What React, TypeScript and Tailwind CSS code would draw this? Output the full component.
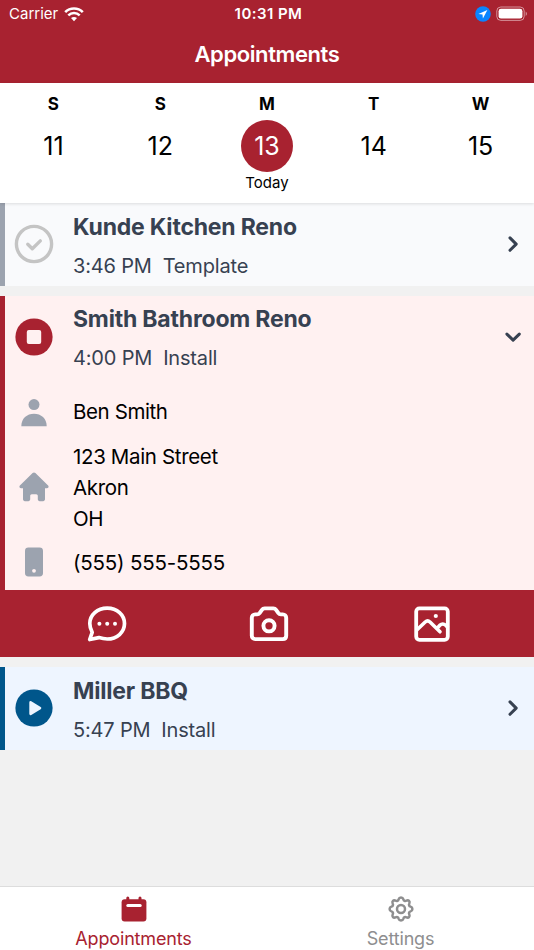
import { useState, type ReactNode } from 'react';
import clsx from 'clsx';

interface Day {
  letter: string;
  date: number;
  today?: boolean;
}

interface Appointment {
  id: string;
  name: string;
  time: string;
  type: string;
  status: 'done' | 'active' | 'upcoming';
  contact?: string;
  address?: string[];
  phone?: string;
}

const days: Day[] = [
  { letter: 'S', date: 11 },
  { letter: 'S', date: 12 },
  { letter: 'M', date: 13, today: true },
  { letter: 'T', date: 14 },
  { letter: 'W', date: 15 },
];

const appointments: Appointment[] = [
  { id: '1', name: 'Kunde Kitchen Reno', time: '3:46 PM', type: 'Template', status: 'done' },
  {
    id: '2',
    name: 'Smith Bathroom Reno',
    time: '4:00 PM',
    type: 'Install',
    status: 'active',
    contact: 'Ben Smith',
    address: ['123 Main Street', 'Akron', 'OH'],
    phone: '(555) 555-5555',
  },
  { id: '3', name: 'Miller BBQ', time: '5:47 PM', type: 'Install', status: 'upcoming' },
];

const cardStyles = {
  done: 'bg-[#f9fafc] border-[#9ca3af]',
  active: 'bg-[#fff1f1] border-[#a82230]',
  upcoming: 'bg-[#eef5ff] border-[#00568b]',
};

/* Icons */

function WifiIcon() {
  return (
    <svg width="20" height="15" viewBox="0 0 20 15" fill="none" stroke="white">
      <path d="M1.2 5.2C6 .3 14 .3 18.8 5.2" strokeWidth="2.6" />
      <path d="M4.3 8.4c3.2-3.2 8.2-3.2 11.4 0" strokeWidth="2.5" />
      <path d="M10 14.2 7 11.1c1.7-1.6 4.3-1.6 6 0Z" fill="white" stroke="none" />
    </svg>
  );
}

function LocationIcon() {
  return (
    <svg width="16" height="16" viewBox="0 0 16 16">
      <circle cx="8" cy="8" r="7.8" fill="#0a84ff" />
      <path d="M12.4 3.9 3.4 8l4.1.5.4 4.1Z" fill="white" />
    </svg>
  );
}

function BatteryIcon() {
  return (
    <svg width="32" height="16" viewBox="0 0 32 16">
      <rect x=".8" y="1" width="27.4" height="13.4" rx="4" fill="none" stroke="white" strokeOpacity=".5" strokeWidth="1" />
      <rect x="2.6" y="2.8" width="23.8" height="9.8" rx="2.4" fill="white" />
      <path d="M29.7 5.4c1.7.7 1.7 3.8 0 4.5Z" fill="white" fillOpacity=".5" />
    </svg>
  );
}

function StatusIcon({ status }: { status: Appointment['status'] }) {
  if (status === 'done') {
    return (
      <svg width="40" height="40" viewBox="0 0 40 40" fill="none" stroke="#c4c4c4">
        <circle cx="20" cy="20" r="17.6" strokeWidth="3.4" />
        <path d="m13.8 20.3 4.5 4.4 8-7.8" strokeWidth="3.4" strokeLinecap="round" strokeLinejoin="round" />
      </svg>
    );
  }
  if (status === 'active') {
    return (
      <svg width="40" height="40" viewBox="0 0 40 40">
        <circle cx="20" cy="20" r="18.6" fill="#a82230" />
        <rect x="12.8" y="12.9" width="14.4" height="14.2" rx="2" fill="#fff1f1" />
      </svg>
    );
  }
  return (
    <svg width="40" height="40" viewBox="0 0 40 40">
      <circle cx="20" cy="20" r="18.6" fill="#00568b" />
      <path d="m16.6 14.4 9.4 5.7-9.4 5.7Z" fill="#eef5ff" stroke="#eef5ff" strokeWidth="2.6" strokeLinejoin="round" />
    </svg>
  );
}

function Chevron({ open }: { open: boolean }) {
  return (
    <svg width="20" height="20" viewBox="0 0 20 20" fill="none" stroke="#374151" strokeWidth="3" strokeLinecap="round" strokeLinejoin="round">
      <path d={open ? 'm3.9 7.1 6.2 6 6.2-6' : 'm7 3.9 6.2 6.2L7 16.3'} />
    </svg>
  );
}

function PersonIcon() {
  return (
    <svg width="30" height="30" viewBox="0 0 30 30" fill="#9ca3af">
      <circle cx="15" cy="7.6" r="5.5" />
      <path d="M2.3 29.3C2.3 21.5 8 16.8 15 16.8s12.7 4.7 12.7 12.5Z" />
    </svg>
  );
}

function HomeIcon() {
  return (
    <svg width="30" height="30" viewBox="0 0 30 30" fill="#9ca3af">
      <path d="M13.6 1.1c.8-.8 2-.8 2.8 0l12.7 12.5c1 1.1.3 2.6-1.1 2.6h-2v11.1c0 1.1-.8 1.9-1.9 1.9h-3.4c-1.1 0-1.9-.8-1.9-1.9V24c0-1-.6-1.7-1.6-1.7h-4.4c-1 0-1.6.7-1.6 1.7v3.3c0 1.1-.8 1.9-1.9 1.9H5.9c-1.1 0-1.9-.8-1.9-1.9V16.2H2c-1.4 0-2.1-1.5-1.1-2.6Z" />
    </svg>
  );
}

function PhoneIcon() {
  return (
    <svg width="30" height="30" viewBox="0 0 30 30">
      <rect x="6" y=".5" width="18" height="29" rx="3.4" fill="#9ca3af" />
      <circle cx="15" cy="23.8" r="1.9" fill="#fff1f1" />
    </svg>
  );
}

function ChatIcon() {
  return (
    <svg width="40" height="36" viewBox="0 0 40 36" fill="none" stroke="white" strokeWidth="3.7" strokeLinejoin="round">
      <path d="M20.2 2.2c9.9 0 17.3 6.8 17.3 15.4S30.1 33 20.2 33c-3 0-5.7-.6-8.3-1.4l-9.2 1.9 2.5-7.1C3.8 23.9 2.8 20.9 2.8 17.6c0-8.6 7.5-15.4 17.4-15.4Z" />
      <g fill="white" stroke="none">
        <circle cx="12.4" cy="17.8" r="2" />
        <circle cx="20.2" cy="17.8" r="2" />
        <circle cx="28" cy="17.8" r="2" />
      </g>
    </svg>
  );
}

function CameraIcon() {
  return (
    <svg width="40" height="36" viewBox="0 0 40 36" fill="none" stroke="white" strokeWidth="3.9" strokeLinejoin="round">
      <path d="M2.8 11.8c0-2 1.4-3.4 3.4-3.4h2c1 0 1.8-.4 2.4-1.2l2.5-3.5c.6-.9 1.5-1.3 2.5-1.3h8.8c1 0 1.9.4 2.5 1.3l2.5 3.5c.6.8 1.4 1.2 2.4 1.2h2c2 0 3.4 1.4 3.4 3.4v18c0 2-1.4 3.3-3.4 3.3H6.2c-2 0-3.4-1.3-3.4-3.3Z" />
      <circle cx="20" cy="19.8" r="5.6" />
    </svg>
  );
}

function PictureIcon() {
  return (
    <svg width="40" height="36" viewBox="0 0 40 36" fill="none" stroke="white" strokeWidth="3.8" strokeLinejoin="round" strokeLinecap="round">
      <rect x="4.2" y="2.4" width="31.6" height="31.4" rx="3.2" />
      <path d="m4.8 24 8.4-8c1.6-1.4 3.2-1.4 4.8 0l10 9.8M25.4 22l2.7-2.9c1.5-1.5 3.8-1.5 5.3-.1l2 1.9" strokeWidth="3.6" />
      <circle cx="23.8" cy="10" r="2.1" fill="white" stroke="none" />
    </svg>
  );
}

function CalendarIcon() {
  return (
    <svg width="26" height="26" viewBox="0 0 26 26">
      <path d="M6.8 2v4M19 2v4" stroke="#a82230" strokeWidth="3" strokeLinecap="round" />
      <rect x=".6" y="3.2" width="24.8" height="22.4" rx="3" fill="#a82230" />
      <path d="M6.8 9.5h12.4" stroke="white" strokeWidth="3" strokeLinecap="round" />
    </svg>
  );
}

function GearIcon() {
  return (
    <svg width="26" height="26" viewBox="0 0 26 26" fill="none" stroke="#8e8e8f" strokeWidth="2.5" strokeLinejoin="round">
      <path d="M10.6 3.4C11.3 1 14.7 1 15.4 3.4c.4 1.5 1.6 2 3 1.3 2.2-1 3.9.7 2.9 2.9-.7 1.4-.2 2.6 1.3 3 2.4.7 2.4 4.1 0 4.8-1.5.4-2 1.6-1.3 3 1 2.2-.7 3.9-2.9 2.9-1.4-.7-2.6-.2-3 1.3-.7 2.4-4.1 2.4-4.8 0-.4-1.5-1.6-2-3-1.3-2.2 1-3.9-.7-2.9-2.9.7-1.4.2-2.6-1.3-3-2.4-.7-2.4-4.1 0-4.8 1.5-.4 2-1.6 1.3-3-1-2.2.7-3.9 2.9-2.9 1.4.7 2.6.2 3-1.3Z" />
      <circle cx="13" cy="13" r="4" />
    </svg>
  );
}

function DetailRow({ icon, children, className }: { icon: ReactNode; children: ReactNode; className?: string }) {
  return (
    <div className={clsx('flex items-center', className)}>
      <div className="w-[68px] pl-[14px] shrink-0">{icon}</div>
      <div className="text-[20.5px] leading-[31px] text-black">{children}</div>
    </div>
  );
}

function AppointmentCard({ item, open, onToggle }: { item: Appointment; open: boolean; onToggle: () => void }) {
  return (
    <section className={clsx('border-l-[5px]', cardStyles[item.status])}>
      <button onClick={onToggle} className="flex items-center w-full h-[82.5px] text-left text-[#374151]">
        <span className="w-[68px] pl-[9px] shrink-0">
          <StatusIcon status={item.status} />
        </span>
        <span className="flex-1 pt-[5px]">
          <span className="block text-[23px] leading-[38px] font-bold tracking-[-0.2px]">{item.name}</span>
          <span className="block text-[20px] leading-[40px] tracking-[-0.17px] whitespace-pre">
            {item.time}  {item.type}
          </span>
        </span>
        <span className="mr-[11px]">
          <Chevron open={open} />
        </span>
      </button>

      {open && item.address && (
        <>
          <div className="h-[212px] pt-[18px]">
            <DetailRow icon={<PersonIcon />} className="tracking-[-0.4px]">{item.contact}</DetailRow>
            <DetailRow icon={<HomeIcon />} className="mt-[13.5px] tracking-[-0.35px]">
              {item.address.map((line) => (
                <p key={line}>{line}</p>
              ))}
            </DetailRow>
            <DetailRow icon={<PhoneIcon />} className="mt-[13px] tracking-[-0.2px]">{item.phone}</DetailRow>
          </div>
          <div className="grid grid-cols-3 h-[67px] pl-[21px] pr-[21px] bg-[#a82230]">
            <button className="flex items-center justify-center"><ChatIcon /></button>
            <button className="flex items-center justify-center"><CameraIcon /></button>
            <button className="flex items-center justify-center"><PictureIcon /></button>
          </div>
        </>
      )}
    </section>
  );
}

export default function App() {
  const [openId, setOpenId] = useState<string | null>('2');

  return (
    <div className="flex flex-col w-full h-[950px] overflow-hidden bg-[#f1f1f1] font-['Inter','Liberation_Sans',sans-serif]">
      {/* Header */}
      <header className="h-[83px] shrink-0 bg-[#a82230] text-white">
        <div className="grid grid-cols-3 items-center h-7 pl-[9px] pr-[6px] text-[15px]">
          <div className="flex items-center gap-[6px]">
            <span>Carrier</span>
            <WifiIcon />
          </div>
          <div className="text-center font-semibold tracking-[0.45px]">10:31 PM</div>
          <div className="flex items-center justify-end gap-[5px]">
            <LocationIcon />
            <BatteryIcon />
          </div>
        </div>
        <h1 className="text-center text-[22px] leading-[53px] font-semibold tracking-[-0.4px]">Appointments</h1>
      </header>

      {/* Day picker */}
      <div className="relative grid grid-cols-5 h-[120px] shrink-0 bg-white text-black shadow-[0_1px_3px_rgba(0,0,0,0.12)]">
        {days.map((day) => (
          <div key={day.date} className="flex flex-col items-center pt-[11px]">
            <span className="text-[17px] leading-5 font-bold">{day.letter}</span>
            <span
              className={clsx(
                'flex items-center justify-center w-[52px] h-[52px] mt-[6px] pt-[2px] rounded-full text-[25px]',
                day.today && 'bg-[#a82230] text-white'
              )}
            >
              {day.date}
            </span>
            {day.today && <span className="mt-px text-[15px] leading-5">Today</span>}
          </div>
        ))}
      </div>

      {/* Appointments */}
      <main className="flex flex-col flex-1 gap-[10px]">
        {appointments.map((item) => (
          <AppointmentCard
            key={item.id}
            item={item}
            open={openId === item.id}
            onToggle={() => setOpenId(openId === item.id ? null : item.id)}
          />
        ))}
      </main>

      {/* Tab bar */}
      <nav className="grid grid-cols-2 h-16 shrink-0 pt-[9px] bg-white border-t border-[#dddddd] text-[18px] leading-[22px] tracking-[-0.15px]">
        <button className="flex flex-col items-center gap-[6px] text-[#a82230]">
          <CalendarIcon />
          Appointments
        </button>
        <button className="flex flex-col items-center gap-[6px] text-[#8e8e8f]">
          <GearIcon />
          Settings
        </button>
      </nav>
    </div>
  );
}
